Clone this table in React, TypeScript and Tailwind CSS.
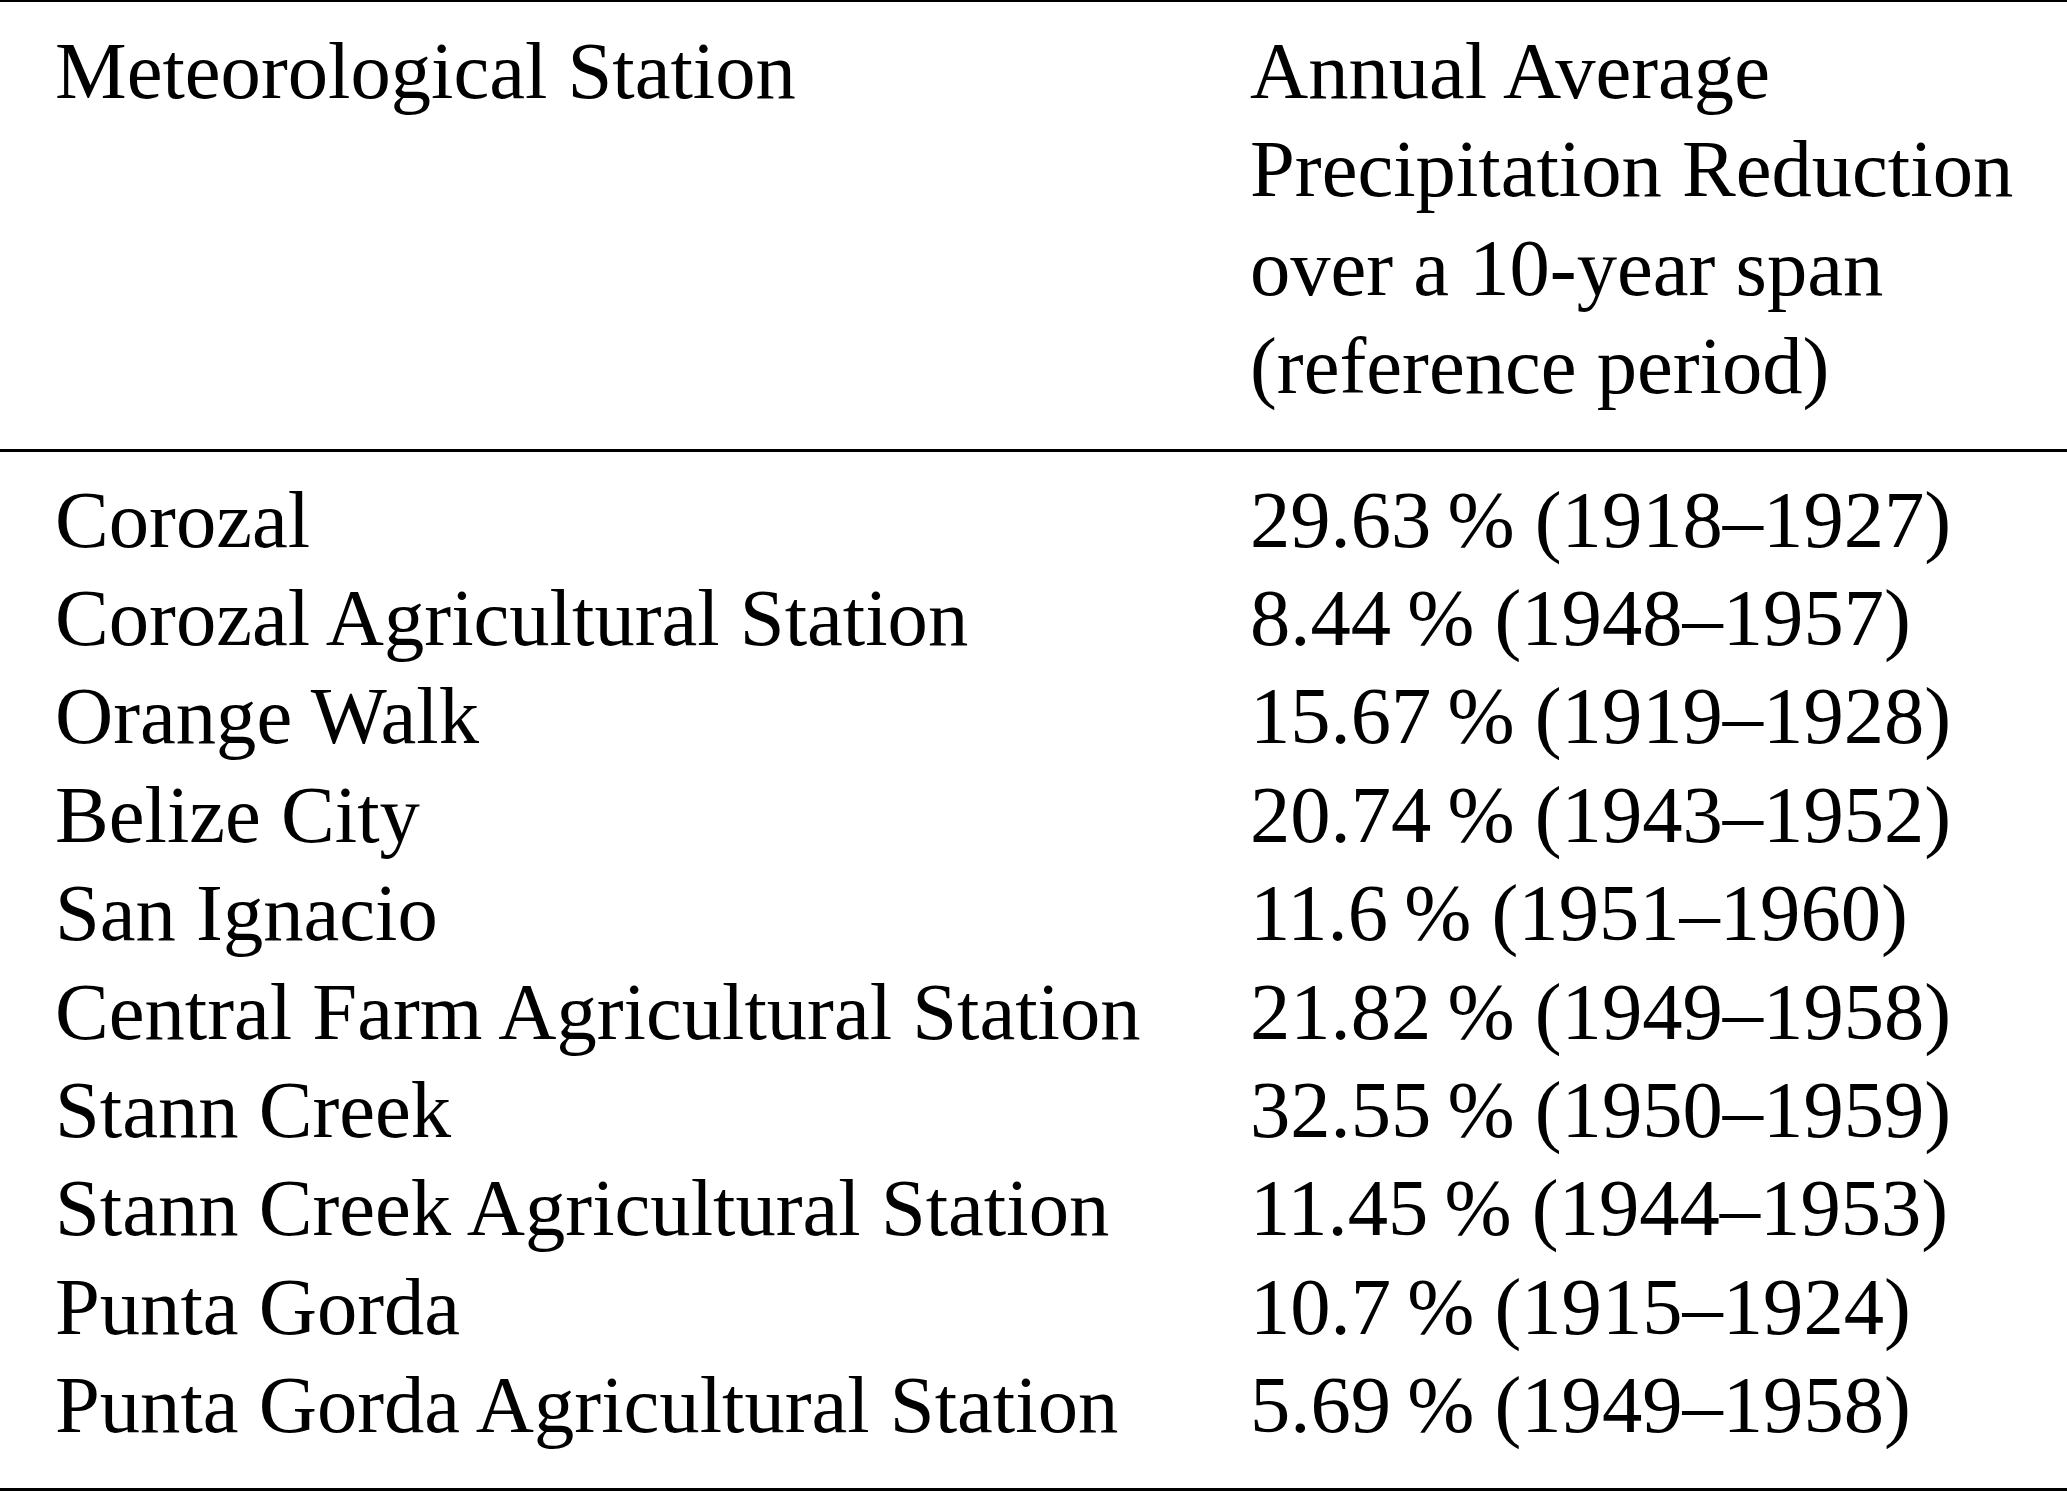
const rows: [string, string, string][] = [
  ['Corozal', '29.63', '1918–1927'],
  ['Corozal Agricultural Station', '8.44', '1948–1957'],
  ['Orange Walk', '15.67', '1919–1928'],
  ['Belize City', '20.74', '1943–1952'],
  ['San Ignacio', '11.6', '1951–1960'],
  ['Central Farm Agricultural Station', '21.82', '1949–1958'],
  ['Stann Creek', '32.55', '1950–1959'],
  ['Stann Creek Agricultural Station', '11.45', '1944–1953'],
  ['Punta Gorda', '10.7', '1915–1924'],
  ['Punta Gorda Agricultural Station', '5.69', '1949–1958'],
];

export default function App() {
  return (
    <div className="w-[2067px] h-[1491px] bg-white text-black font-['Liberation_Serif',serif] text-[80.6px] leading-[98.4px]">
      {/* header */}
      <div className="border-t-[2px] border-black pt-[20px] pb-[33px] grid grid-cols-[1195px_1fr] pl-[55px]">
        <div>Meteorological Station</div>
        <div>
          <div>Annual Average</div>
          <div>Precipitation Reduction</div>
          <div>over a 10-year span</div>
          <div>(reference period)</div>
        </div>
      </div>

      {/* body */}
      <div className="border-t-[3px] border-b-4 border-black pt-[19px] pb-[33px] pl-[55px]">
        {rows.map(([station, value, period]) => (
          <div key={station} className="grid grid-cols-[1195px_1fr]">
            <div>{station}</div>
            <div>
              {value}
              {'\u2009'}% ({period})
            </div>
          </div>
        ))}
      </div>
    </div>
  );
}
